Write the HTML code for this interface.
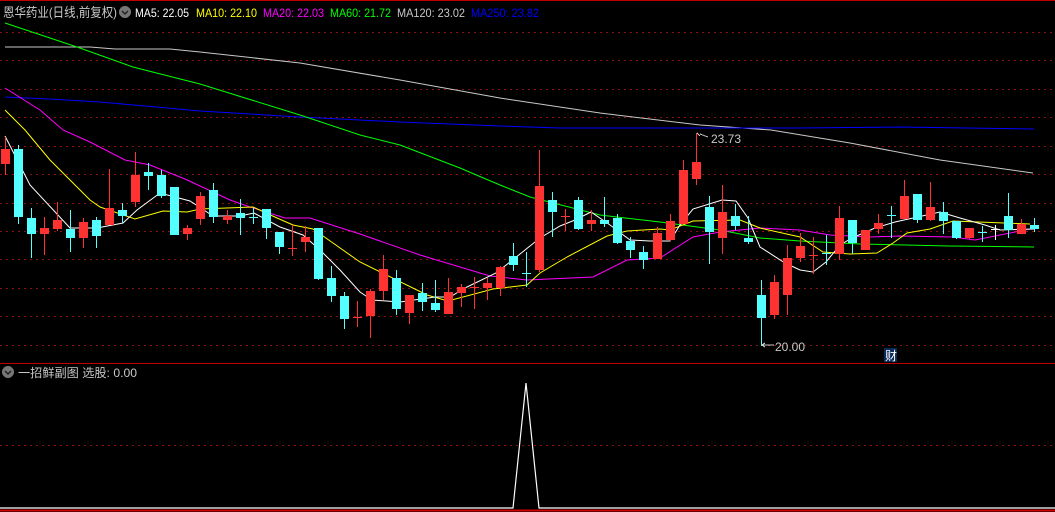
<!DOCTYPE html>
<html><head><meta charset="utf-8"><style>
html,body{margin:0;padding:0;background:#000;width:1055px;height:512px;overflow:hidden}
svg{display:block}
text{font-family:"Liberation Sans","Noto Sans CJK SC",sans-serif}
</style></head><body>
<svg id="s" width="1055" height="512" viewBox="0 0 1055 512" xmlns="http://www.w3.org/2000/svg" shape-rendering="crispEdges">
<rect width="1055" height="512" fill="#000"/>
<line x1="0" y1="0.5" x2="1055" y2="0.5" stroke="#c00000"/>
<g id="grid" stroke="#8b1010" stroke-dasharray="2,4"></g>
<line x1="0" y1="363.5" x2="1055" y2="363.5" stroke="#c00000"/>
<g id="ma" fill="none" stroke-width="1" shape-rendering="auto"></g>
<g id="cd"></g>
<text x="3" y="17" font-size="13" fill="#c8c8c8" textLength="114" lengthAdjust="spacingAndGlyphs">恩华药业(日线,前复权)</text>
<circle cx="125" cy="12" r="6" fill="#777"/>
<path d="M122 11 l3 3 l3 -3" stroke="#222" stroke-width="1.5" fill="none" shape-rendering="auto"/>
<text x="135" y="17" font-size="12" fill="#ffffff" textLength="54" lengthAdjust="spacingAndGlyphs">MA5: 22.05</text>
<text x="196" y="17" font-size="12" fill="#ffff00" textLength="61" lengthAdjust="spacingAndGlyphs">MA10: 22.10</text>
<text x="263" y="17" font-size="12" fill="#ff00ff" textLength="61" lengthAdjust="spacingAndGlyphs">MA20: 22.03</text>
<text x="330" y="17" font-size="12" fill="#00ff00" textLength="61" lengthAdjust="spacingAndGlyphs">MA60: 21.72</text>
<text x="397" y="17" font-size="12" fill="#c8c8c8" textLength="68" lengthAdjust="spacingAndGlyphs">MA120: 23.02</text>
<text x="471" y="17" font-size="12" fill="#0000ff" textLength="68" lengthAdjust="spacingAndGlyphs">MA250: 23.82</text>
<path d="M697 133 l3 3 M700 134 l8 3" stroke="#c8c8c8" fill="none"/>
<text x="711" y="143" font-size="12" fill="#c8c8c8">23.73</text>
<path d="M762 345 h12 M762 345 l3 -2 M762 345 l3 2" stroke="#c8c8c8" fill="none"/>
<text x="775" y="351" font-size="12" fill="#c8c8c8">20.00</text>
<rect x="884" y="348" width="13" height="14" fill="#0a2a5a"/>
<text x="885" y="360" font-size="12" fill="#ffffff">财</text>
<circle cx="8" cy="372" r="6" fill="#777"/>
<path d="M5 371 l3 3 l3 -3" stroke="#222" stroke-width="1.5" fill="none" shape-rendering="auto"/>
<text x="18" y="377" font-size="12" fill="#c8c8c8" textLength="119" lengthAdjust="spacingAndGlyphs">一招鲜副图 选股: 0.00</text>
<line x1="0" y1="445.5" x2="1055" y2="445.5" stroke="#8b1010" stroke-dasharray="2,4"/>
<polyline points="0,508 513,508 526,383 539,508 1055,508" fill="none" stroke="#fff" stroke-width="1.2" shape-rendering="auto"/>
<line x1="0" y1="510.5" x2="1055" y2="510.5" stroke="#d00000" stroke-width="2"/>
</svg>
<script>
var NS="http://www.w3.org/2000/svg",g=document.getElementById('grid');
[32,60,89,117,146,174,203,231,259,288,316,345].forEach(function(y){var l=document.createElementNS(NS,'line');l.setAttribute('x1',0);l.setAttribute('x2',1055);l.setAttribute('y1',y+.5);l.setAttribute('y2',y+.5);g.appendChild(l);});
var ma={
"#c8c8c8":[[5,47],[90,47],[115,49],[170,49],[200,52],[300,63],[400,80],[500,98],[600,113],[700,125],[771,130],[850,143],[940,160],[1033,173]],
"#0000ff":[[5,97],[50,99],[100,102],[200,111],[300,117],[400,122],[500,126],[560,128],[700,128],[800,128],[900,127],[1034,129]],
"#00ff00":[[5,23],[77,47],[133,67],[200,84],[300,115],[360,135],[400,145],[460,168],[500,185],[530,197],[600,215],[660,222],[720,230],[760,238],[800,241],[860,244],[950,246],[1034,247]],
"#ff00ff":[[5,88],[40,110],[63,130],[90,142],[125,160],[150,165],[185,179],[230,200],[250,207],[285,218],[310,218],[360,234],[420,255],[490,276],[527,280],[593,277],[627,260],[660,258],[693,237],[720,232],[760,228],[800,230],[830,235],[870,237],[900,236],[953,237],[975,240],[1030,229]],
"#ffff00":[[5,110],[25,130],[50,160],[90,200],[100,207],[135,219],[163,211],[187,212],[200,209],[253,207],[277,218],[293,225],[313,229],[333,243],[360,262],[427,295],[448,301],[493,289],[527,285],[540,273],[567,257],[607,236],[627,231],[660,229],[670,230],[693,221],[740,220],[760,228],[800,237],[823,252],[850,254],[877,253],[893,243],[907,233],[930,229],[953,221],[1030,224]],
"#ffffff":[[5,136],[30,185],[70,228],[97,228],[123,223],[137,210],[160,193],[175,197],[190,201],[213,216],[240,216],[254,213],[280,227],[303,235],[320,250],[340,270],[360,292],[372,300],[400,302],[435,297],[450,297],[465,288],[496,273],[510,262],[525,250],[540,238],[560,226],[575,220],[591,212],[610,225],[630,240],[650,241],[670,241],[680,225],[693,209],[722,200],[736,201],[748,218],[760,247],[785,263],[800,270],[813,272],[826,262],[840,245],[852,238],[875,228],[895,222],[913,218],[940,212],[960,218],[985,225],[1000,230],[1034,229]]};
var mg=document.getElementById('ma');
for(var c in ma){var p=document.createElementNS(NS,'polyline');p.setAttribute('points',ma[c].map(function(a){return a.join(',')}).join(' '));p.setAttribute('stroke',c);mg.appendChild(p);}
var R='#ff3232',C='#54ffff',W='#ffffff';
var d=[[R,149,163,137,174],[C,149,216,145,223],[C,218,233,208,257],[R,228,233,217,254],[R,220,228,202,230],[C,229,237,210,251],[R,222,237,218,247],[C,220,235,217,247],[R,208,224,169,224],[C,210,215,203,222],[R,175,201,152,206],[C,172,175,163,189],[C,175,195,170,197],[C,187,234,187,234],[R,228,233,225,239],[R,196,218,192,224],[C,190,216,183,222],[R,216,219,210,223],[C,213,217,199,234],[C,217,217,208,223],[C,209,227,209,238],[C,232,246,232,253],[R,248,248,225,255],[R,237,241,226,251],[C,228,278,228,279],[C,278,295,266,301],[C,296,318,292,328],[R,317,317,301,326],
[R,291,315,289,337],[R,269,290,255,299],[C,278,308,270,314],[R,295,312,295,323],[C,293,301,283,310],[C,303,309,280,311],[R,292,313,278,313],[R,287,292,284,306],[R,287,287,277,308],[R,283,287,278,299],[R,267,287,266,295],[C,256,264,243,270],[C,273,273,252,286],[R,186,269,150,271],[C,200,211,192,236],[R,216,216,209,230],[C,200,228,197,229],[R,220,223,210,230],[C,220,223,197,226],[C,218,242,214,243],[C,241,249,237,257],[C,252,259,246,268],[R,233,258,227,258],[R,221,239,214,240],[R,170,223,160,223],[R,162,178,133,184],[C,207,231,196,263],[R,212,237,185,253],[C,216,225,204,229],[C,238,241,216,243],[C,295,317,280,345],[R,282,314,275,318],[R,258,294,245,314],[R,246,257,233,261],[R,255,255,237,273],[C,253,253,235,264],[R,218,253,206,259],[C,220,242,220,253],[R,230,249,230,249],[R,223,228,214,233],[C,215,215,206,237],[R,196,218,180,218],[C,194,219,194,222],[R,207,219,182,220],[C,212,220,202,233],[C,221,237,221,238],[R,228,237,228,238],[C,232,232,226,241],[W,229,229,225,239],[C,216,229,193,237],[R,224,233,219,233],[C,225,228,218,231]];
var cg=document.getElementById('cd');
function rect(x,y,w,h,f){var r=document.createElementNS(NS,'rect');r.setAttribute('x',x);r.setAttribute('y',y);r.setAttribute('width',w);r.setAttribute('height',h);r.setAttribute('fill',f);cg.appendChild(r);}
d.forEach(function(a,i){var x=Math.round(5+13.03*i);rect(x,a[3],1,a[4]-a[3]+1,a[0]);var h=a[2]-a[1];rect(x-4,a[1],9,h<1?1:h+1,a[0]);});
</script>
</body></html>
